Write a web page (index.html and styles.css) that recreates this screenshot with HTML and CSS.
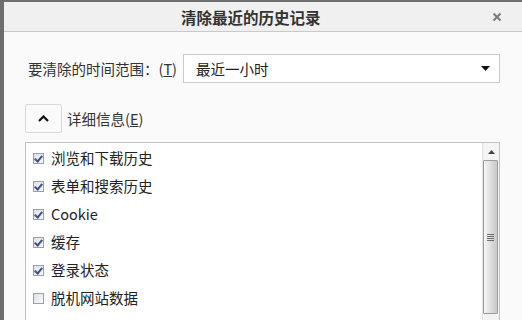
FILE: index.html
```html
<!DOCTYPE html>
<html>
<head>
<meta charset="utf-8">
<link rel="stylesheet" href="styles.css">
</head>
<body>
<div class="frame">
  <div class="dialog">
    <div class="titlebar">
      <div class="title">清除最近的历史记录</div>
      <div class="close">
        <svg width="10" height="10" viewBox="0 0 10 10"><path d="M1.5 1.5 L8.5 8.5 M8.5 1.5 L1.5 8.5" stroke="#7a7a7a" stroke-width="2" fill="none"/></svg>
      </div>
    </div>
    <div class="content">
      <div class="range-row">
        <span class="label">要清除的时间范围：(<u>T</u>)</span>
        <div class="select">
          <span>最近一小时</span>
          <svg width="9" height="5" viewBox="0 0 9 5"><path d="M0 0 H9 L4.5 5 Z" fill="#111"/></svg>
        </div>
      </div>
      <div class="details-row">
        <div class="toggle">
          <svg width="11" height="7" viewBox="0 0 11 7"><path d="M1 6 L5.5 1.5 L10 6" stroke="#111" stroke-width="2.2" fill="none"/></svg>
        </div>
        <span class="label">详细信息(<u>E</u>)</span>
      </div>
      <div class="listbox">
        <div class="items">
          <div class="item"><span class="cb checked"></span><span>浏览和下载历史</span></div>
          <div class="item"><span class="cb checked"></span><span>表单和搜索历史</span></div>
          <div class="item"><span class="cb checked"></span><span>Cookie</span></div>
          <div class="item"><span class="cb checked"></span><span>缓存</span></div>
          <div class="item"><span class="cb checked"></span><span>登录状态</span></div>
          <div class="item"><span class="cb"></span><span>脱机网站数据</span></div>
          <div class="item"><span class="cb"></span></div>
        </div>
        <div class="scrollbar">
          <div class="sb-up">
            <svg width="7" height="4" viewBox="0 0 7 4"><path d="M0 4 L3.5 0 L7 4 Z" fill="#444"/></svg>
          </div>
          <div class="thumb">
            <div class="grip"><i></i><i></i><i></i><i></i></div>
          </div>
        </div>
      </div>
    </div>
  </div>
</div>
</body>
</html>
```
FILE: styles.css
```css
html, body {
  margin: 0;
  padding: 0;
}
body {
  width: 522px;
  height: 320px;
  overflow: hidden;
  background: #6e6e6e;
  font-family: "Noto Sans CJK SC", "Noto Sans", sans-serif;
  color: #2b2b2b;
}
.frame {
  padding: 2px 0 0 4px;
  height: 318px;
}
.dialog {
  background: #fafafa;
  height: 318px;
  display: flex;
  flex-direction: column;
}
.titlebar {
  height: 29px;
  flex: none;
  background: #f0f0f0;
  border-bottom: 1px solid #c9c9c9;
  display: flex;
  align-items: center;
  padding-left: 177px;
}
.title {
  font-size: 15.5px;
  font-weight: bold;
  color: #333;
  line-height: 20px;
  margin-top: 1px;
}
.close {
  margin-left: auto;
  margin-right: 20px;
  display: flex;
  align-items: center;
}
.content {
  display: flex;
  flex-direction: column;
  padding-left: 21px;
  padding-right: 22px;
}
.label {
  font-size: 14.5px;
  color: #333;
  line-height: 20px;
}
.label u {
  text-decoration: underline;
  text-underline-offset: 1px;
}
.range-row {
  margin-top: 22px;
  display: flex;
  align-items: center;
  padding-left: 3px;
}
.range-row .label {
  width: 155px;
}
.select {
  height: 27px;
  margin-left: 1px;
  background: #fff;
  border: 1px solid #cacaca;
  display: flex;
  align-items: center;
  justify-content: space-between;
  padding: 0 9px 0 12px;
  box-sizing: content-box;
  width: 296px;
  font-size: 14.5px;
  line-height: 20px;
  color: #222;
}
.details-row {
  margin-top: 21px;
  display: flex;
  align-items: center;
}
.toggle {
  width: 35px;
  height: 27px;
  border: 1px solid #d9d9d9;
  border-radius: 2px;
  background: #fafafa;
  display: flex;
  align-items: center;
  justify-content: center;
  margin-right: 5px;
}
.listbox {
  margin-top: 9px;
  width: 473px;
  height: 200px;
  border: 1px solid #c3c3c3;
  background: #fff;
  display: flex;
}
.items {
  flex: 1;
  display: flex;
  flex-direction: column;
  padding-left: 7px;
  padding-top: 1px;
}
.item {
  height: 28px;
  flex: none;
  display: flex;
  align-items: center;
  font-size: 14.5px;
  line-height: 20px;
  color: #222;
}
.cb {
  width: 9px;
  height: 9px;
  border: 1px solid #9aa0a8;
  background: linear-gradient(135deg, #dcdfe4, #fbfbfc);
  margin-right: 7px;
  position: relative;
  flex: none;
}
.cb.checked::after {
  content: "";
  position: absolute;
  left: 2px;
  top: 0px;
  width: 3px;
  height: 6px;
  border-right: 2px solid #3d4f8f;
  border-bottom: 2px solid #3d4f8f;
  transform: rotate(40deg);
}
.scrollbar {
  width: 16px;
  background: #f3f3f3;
  border-left: 1px solid #e2e2e2;
  display: flex;
  flex-direction: column;
}
.sb-up {
  height: 17px;
  display: flex;
  align-items: center;
  justify-content: center;
  background: #f5f5f5;
}
.thumb {
  height: 152px;
  margin: 0 1px 0 0;
  border: 1px solid #9d9d9d;
  border-radius: 1px;
  background: linear-gradient(to right, #f6f6f6 0%, #e9e9e9 30%, #d4d4d4 70%, #c9c9c9 100%);
  display: flex;
  align-items: center;
  justify-content: center;
}
.grip {
  display: flex;
  flex-direction: column;
  gap: 1px;
}
.grip i {
  display: block;
  width: 7px;
  height: 1px;
  background: #6d6d6d;
}
```
